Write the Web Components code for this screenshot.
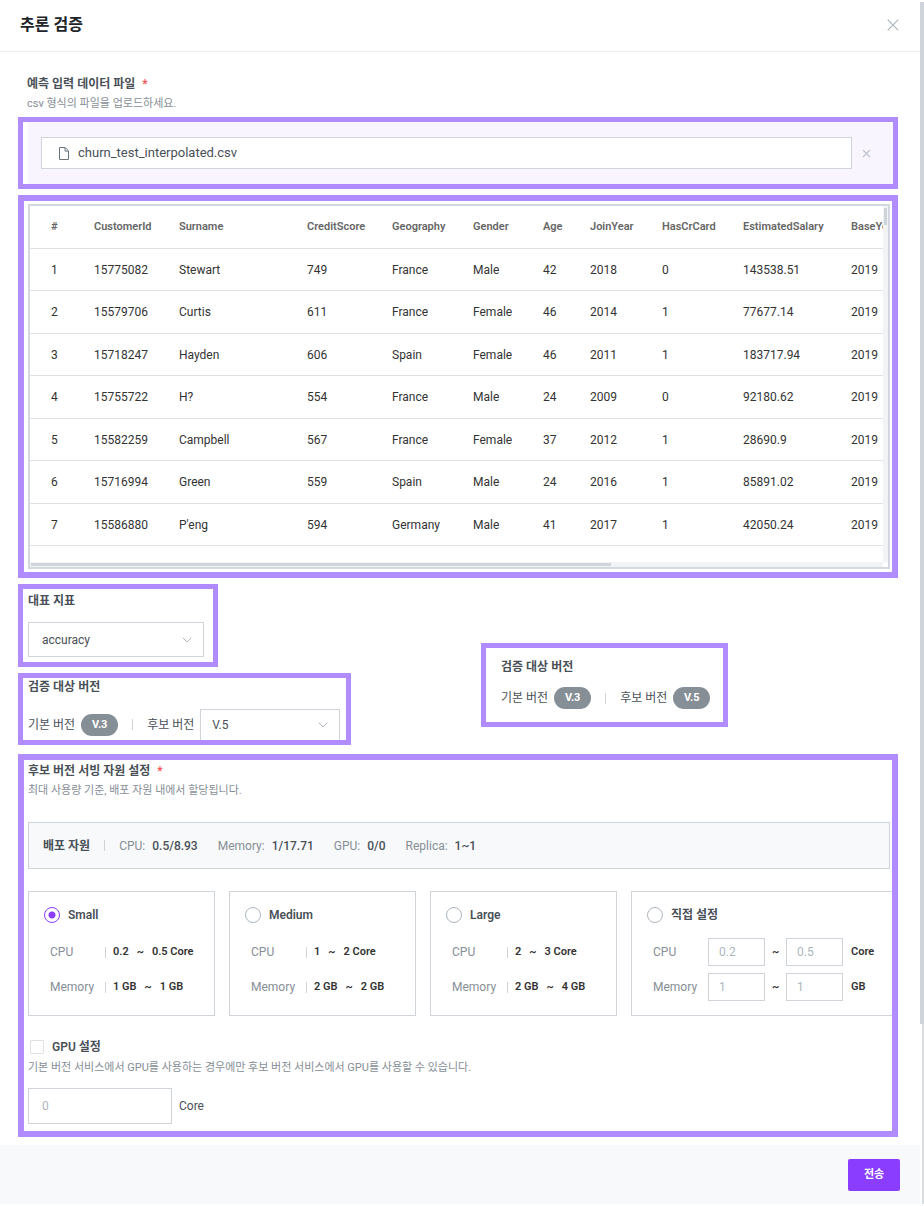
<!DOCTYPE html>
<html lang="ko">
<head>
<meta charset="utf-8">
<title>추론 검증</title>
<style>
  body { margin: 0; background: #fff; color: #495057; font: 12px/18px Roboto, "Noto Sans CJK KR", sans-serif;
    --line: #ced4da; --muted: #868e96; --accent: #8b3dff; --mark: #b08cff; --soft: #f8f9fb; }
</style>
</head>
<body>
<verify-dialog>
  <field-title required hint="csv 형식의 파일을 업로드하세요.">예측 입력 데이터 파일</field-title>
  <mark-box class="file"><file-row name="churn_test_interpolated.csv"></file-row></mark-box>
  <mark-box class="preview" thick><data-preview></data-preview></mark-box>
  <version-area></version-area>
  <mark-box class="resources" thick>
    <field-title required hint="최대 사용량 기준, 배포 자원 내에서 할당됩니다.">후보 버전 서빙 자원 설정</field-title>
    <quota-bar></quota-bar>
    <size-picker></size-picker>
    <gpu-setting></gpu-setting>
  </mark-box>
</verify-dialog>

<script>
const base = `:host,*,*::before{box-sizing:border-box}
  button,input,select{font:inherit;color:inherit;margin:0;border-radius:0}
  input:focus,select:focus{outline:1px solid var(--accent)}`;

function define(name, render) {
  customElements.define(name, class extends HTMLElement {
    constructor() {
      super();
      this.attachShadow({ mode: 'open' });
    }
    connectedCallback() {
      const t = document.createElement('template');
      t.innerHTML = `<style>${base}</style>` + render(this);
      this.shadowRoot.replaceChildren(t.content.cloneNode(true));
    }
  });
}

/* Purple highlight frame around a group */
define('mark-box', () => `
  <style>
    :host{display:block;border:5px solid var(--mark);overflow:hidden}
    :host([thick]){border-width:6px}
  </style><slot></slot>`);

/* Section label with an optional asterisk and hint line */
define('field-title', el => `
  <style>
    :host{display:block}
    h2{margin:0;font-size:12px;line-height:18px;font-weight:600;color:#495057}
    span{color:#fa5252;margin-left:4px}
    p{margin:2px 0 0;font-size:11px;line-height:18px;color:var(--muted)}
  </style>
  <h2><slot></slot>${el.hasAttribute('required') ? ' <span>*</span>' : ''}</h2>
  ${el.hasAttribute('hint') ? `<p>${el.getAttribute('hint')}</p>` : ''}`);

define('file-row', el => `
  <style>
    :host{display:flex;align-items:center;margin-left:5px;padding:15px 22px 15px 13px;background:#f8f5ff}
    .box{flex:1;display:flex;align-items:center;gap:9px;height:32px;padding:0 17px;border:1px solid var(--line);background:#fff;font-size:13px}
    button{display:flex;margin-left:10px;padding:0;border:0;background:none;cursor:pointer}
  </style>
  <div class="box">
    <svg width="10" height="13" viewBox="0 0 10 13" fill="none" stroke="#6c757d"><path d="M.5.5h5.7l3.3 3.4v8.6h-9zM6 .7v3.4h3.4"/></svg>
    <span>${el.getAttribute('name')}</span>
  </div>
  <button type="button" aria-label="파일 삭제"><svg width="9" height="9" viewBox="0 0 9 9" stroke="#bfc3cf" stroke-width="1.2"><path d="M1 1l7 7M8 1L1 8"/></svg></button>`);

const columns = ['#', 'CustomerId', 'Surname', 'CreditScore', 'Geography', 'Gender', 'Age', 'JoinYear', 'HasCrCard', 'EstimatedSalary', 'BaseYear'];
const widths = [43, 85, 128, 85, 81, 70, 47, 72, 81, 108, 90];
const rows = [
  [1, 15775082, 'Stewart', 749, 'France', 'Male', 42, 2018, 0, '143538.51', 2019],
  [2, 15579706, 'Curtis', 611, 'France', 'Female', 46, 2014, 1, '77677.14', 2019],
  [3, 15718247, 'Hayden', 606, 'Spain', 'Female', 46, 2011, 1, '183717.94', 2019],
  [4, 15755722, 'H?', 554, 'France', 'Male', 24, 2009, 0, '92180.62', 2019],
  [5, 15582259, 'Campbell', 567, 'France', 'Female', 37, 2012, 1, '28690.9', 2019],
  [6, 15716994, 'Green', 559, 'Spain', 'Male', 24, 2016, 1, '85891.02', 2019],
  [7, 15586880, "P'eng", 594, 'Germany', 'Male', 41, 2017, 1, '42050.24', 2019]
];
define('data-preview', () => `
  <style>
    :host{display:grid;grid-template-columns:minmax(0,1fr) 5px;grid-template-rows:356px 5px;margin:3px 2px 3px 4px;border:2px solid #d3d8de}
    .view{overflow:hidden}
    table{width:890px;table-layout:fixed;border-collapse:separate;border-spacing:0}
    th,td{height:42px;padding:0 0 0 21px;text-align:left;white-space:nowrap;border-bottom:1px solid #dee2e6}
    tr:nth-child(even) td,th{height:43px}
    th{font-size:11px;font-weight:600;color:#666}
    td{font-size:12px;color:#333}
    .track{background:#f1f3f5}
    .track i{display:block;background:#ced4da}
    .v i{width:3px;height:17px;margin:2px 0 0 1px}
    .h i{width:68%;height:3px;margin:1px}
  </style>
  <div class="view"><table>
    <colgroup>${widths.map(w => `<col style="width:${w}px">`).join('')}</colgroup>
    <thead><tr>${columns.map(c => `<th scope="col">${c}</th>`).join('')}</tr></thead>
    <tbody>${rows.map(r => `<tr>${r.map(c => `<td>${c}</td>`).join('')}</tr>`).join('')}</tbody>
  </table></div>
  <div class="track v"><i></i></div><div class="track h"><i></i></div>`);

/* Drop-down with its own chevron */
define('pick-list', el => `
  <style>
    :host{display:grid;align-items:center;height:35px}
    select,svg{grid-area:1/1}
    select{appearance:none;width:100%;height:100%;padding:0 30px 0 var(--inset,13px);border:1px solid var(--line);background:#fff}
    svg{justify-self:end;margin-right:12px;pointer-events:none}
  </style>
  <select aria-label="${el.getAttribute('label')}"><option>${el.getAttribute('value')}</option></select>
  <svg width="10" height="6" viewBox="0 0 10 6" fill="none" stroke="#b4bac1"><path d="M.7.7L5 5 9.3.7"/></svg>`);

define('version-pill', () => `
  <style>:host{display:block;width:37px;border-radius:11px;background:#868e96;color:#fff;font-size:11px;font-weight:700;line-height:22px;text-align:center}</style>
  <slot></slot>`);

define('version-area', () => `
  <style>
    :host{display:grid;grid-template-columns:463fr 417fr;align-items:start;margin-top:6px}
    mark-box{width:fit-content}
    .metric{padding:3px 9px 5px 5px}
    .metric pick-list{width:176px;margin-top:12px}
    .target{height:72px;margin-top:6px;padding:0 6px 0 5px}
    .summary{margin-top:59px;padding:10px 13px 13px 15px}
    .row{display:flex;align-items:center;gap:6px;white-space:nowrap}
    .row i{width:1px;height:11px;margin:0 8px;background:#ced4da}
    .target .row{height:31px;margin-top:13px}
    .target pick-list{width:140px;height:32px;align-self:flex-start;--inset:11px}
    .summary .row{margin-top:11px}
  </style>
  <div>
    <mark-box class="metric"><field-title>대표 지표</field-title><pick-list label="대표 지표" value="accuracy"></pick-list></mark-box>
    <mark-box class="target"><field-title>검증 대상 버전</field-title>
      <div class="row"><span>기본 버전</span><version-pill>V.3</version-pill><i></i><span>후보 버전</span><pick-list label="후보 버전" value="V.5"></pick-list></div></mark-box>
  </div>
  <mark-box class="summary"><field-title>검증 대상 버전</field-title>
    <div class="row"><span>기본 버전</span><version-pill>V.3</version-pill><i></i><span>후보 버전</span><version-pill>V.5</version-pill></div></mark-box>`);

define('quota-bar', () => `
  <style>
    :host{display:flex;align-items:center;height:47px;margin:22px 2px 0 0;padding-left:14px;border:1px solid var(--line);background:var(--soft);font-size:12px}
    b{font-weight:600}
    i{width:1px;height:11px;margin:0 14px;background:#ced4da}
    dl{display:flex;gap:20px;margin:0}
    div{display:flex;gap:7px}
    dt{color:var(--muted)}
    dd{margin:0;font-weight:500}
  </style>
  <b>배포 자원</b><i></i>
  <dl>${[['CPU', '0.5/8.93'], ['Memory', '1/17.71'], ['GPU', '0/0'], ['Replica', '1~1']].map(([k, v]) => `<div><dt>${k}:</dt><dd>${v}</dd></div>`).join('')}</dl>`);

const sizes = [
  ['Small', ['0.2', '0.5 Core'], ['1 GB', '1 GB']],
  ['Medium', ['1', '2 Core'], ['2 GB', '2 GB']],
  ['Large', ['2', '3 Core'], ['2 GB', '4 GB']]
];
const fixedRow = (k, [a, b]) => `<div class="row"><span class="key">${k}</span><i></i><span class="val"><span>${a}</span><span>~</span><span>${b}</span></span></div>`;
const inputRow = (k, a, b, unit) => `<div class="row"><span class="key">${k}</span><input type="text" placeholder="${a}" aria-label="${k} 최소"><span class="to">~</span><input type="text" placeholder="${b}" aria-label="${k} 최대"><span class="unit">${unit}</span></div>`;
const card = (title, body, on) => `<section><label><input type="radio" name="size"${on ? ' checked' : ''}>${title}</label>${body}</section>`;
define('size-picker', () => `
  <style>
    :host{display:grid;grid-template-columns:187fr 187fr 187fr 261fr;gap:14px;margin-top:22px}
    section{min-width:0;padding:14px 0 14px 15px;border:1px solid var(--line)}
    section:last-child{border-right:0}
    label{display:flex;align-items:center;gap:8px;height:18px;margin-bottom:14px;font-weight:600}
    input[type=radio]{appearance:none;width:16px;height:16px;border:1px solid #adb5bd;border-radius:50%;background:#fff}
    input[type=radio]:checked{border-color:var(--accent);background:radial-gradient(circle,var(--accent) 3px,#fff 4px)}
    .row{display:flex;align-items:center;height:28px;margin:0 0 7px 6px;color:#333;font-size:11px;font-weight:600;white-space:nowrap}
    .row:last-child{margin-bottom:0}
    .key{width:55px;color:var(--muted);font-size:12px;font-weight:400}
    i{width:1px;height:11px;background:#ced4da}
    .val{display:flex;gap:8px;padding-left:7px}
    input[type=text]{width:57px;height:28px;padding:0 10px;border:1px solid var(--line);font-size:12px;font-weight:400}
    ::placeholder{color:#adb5bd;opacity:1}
    .to{width:21px;text-align:center}
    .unit{margin-left:8px}
  </style>
  ${sizes.map(([t, c, m], n) => card(t, fixedRow('CPU', c) + fixedRow('Memory', m), n === 0)).join('')}
  ${card('직접 설정', inputRow('CPU', '0.2', '0.5', 'Core') + inputRow('Memory', '1', '1', 'GB'))}`);

define('gpu-setting', () => `
  <style>
    :host{display:block;margin-top:22px}
    label{display:flex;align-items:center;gap:8px;height:18px;font-weight:600}
    input[type=checkbox]{appearance:none;width:14px;height:14px;margin-left:2px;border:1px solid #dee2e6;border-radius:1px;background:#fff}
    input[type=checkbox]:checked{background:var(--accent)}
    p{margin:3px 0 11px;font-size:11px;line-height:18px;color:var(--muted)}
    div{display:flex;align-items:center;gap:7px}
    input[type=text]{width:144px;height:36px;padding:0 13px;border:1px solid var(--line)}
    ::placeholder{color:#adb5bd;opacity:1}
  </style>
  <label><input type="checkbox">GPU 설정</label>
  <p>기본 버전 서비스에서 GPU를 사용하는 경우에만 후보 버전 서비스에서 GPU를 사용할 수 있습니다.</p>
  <div><input type="text" placeholder="0" aria-label="GPU Core"><span>Core</span></div>`);

define('verify-dialog', () => `
  <style>
    :host{display:grid;grid-template-columns:minmax(0,1fr) 4px;padding-bottom:2px}
    header{display:flex;align-items:center;justify-content:space-between;height:52px;padding:0 21px 2px 20px;border-bottom:1px solid #e9ecef}
    h1{margin:0;font-size:16px;line-height:24px;font-weight:700;color:#212529}
    header button{display:flex;padding:0;border:0;background:none;cursor:pointer}
    main{padding:23px 22px 8px 18px}
    ::slotted(field-title){margin-left:9px}
    ::slotted(.file){margin-top:4px}
    ::slotted(.preview){margin-top:6px}
    ::slotted(.resources){margin-top:9px;padding:2px 0 7px 4px}
    footer{display:flex;align-items:center;justify-content:flex-end;height:59px;padding-right:20px;background:var(--soft)}
    footer button{width:52px;height:32px;padding:0;border:0;border-radius:2px;background:var(--accent);color:#fff;font-size:11px;font-weight:600;cursor:pointer}
    .rail{display:flex;flex-direction:column;margin-top:2px}
    .rail::before{content:"";flex:0 0 85%;background:#ced4da}
    .rail::after{content:"";flex:1;border-right:2px solid #d8dde2}
  </style>
  <div>
    <header><h1>추론 검증</h1><button type="button" aria-label="닫기"><svg width="12" height="12" viewBox="0 0 12 12" stroke="#adb5bd" stroke-width="1.2"><path d="M.7.7l10.6 10.6M11.3.7L.7 11.3"/></svg></button></header>
    <main><slot></slot></main>
    <footer><button type="button">전송</button></footer>
  </div>
  <div class="rail"></div>`);
</script>
</body>
</html>
